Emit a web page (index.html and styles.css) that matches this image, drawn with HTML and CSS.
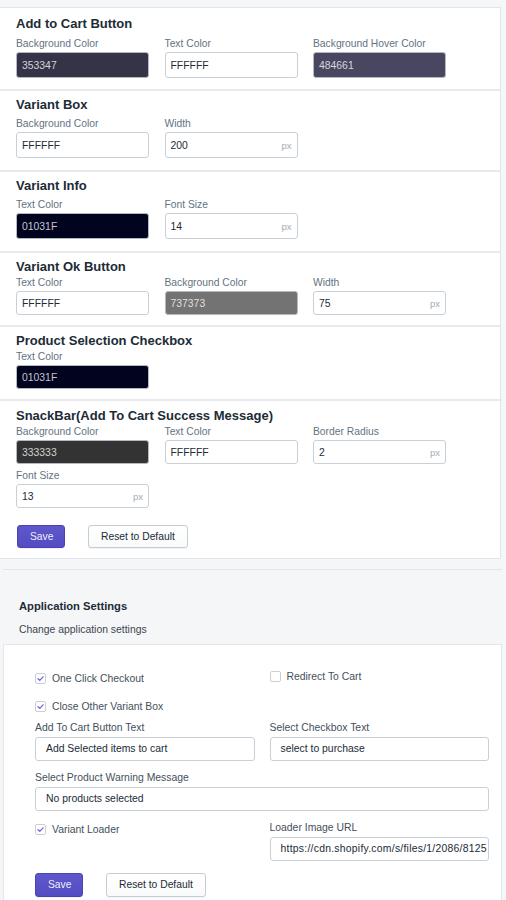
FILE: index.html
```html
<!DOCTYPE html>
<html lang="en">
<head>
<meta charset="utf-8">
<title>Settings</title>
<link rel="stylesheet" href="styles.css">
</head>
<body>
<div class="page">
  <div class="settings">
    <section class="group first">
      <h2 class="group-title">Add to Cart Button</h2>
      <div class="fields">
        <div class="field"><span class="field-label">Background Color</span><div class="input dark" style="background:#353347">353347</div></div>
        <div class="field"><span class="field-label">Text Color</span><div class="input">FFFFFF</div></div>
        <div class="field"><span class="field-label">Background Hover Color</span><div class="input dark" style="background:#484661">484661</div></div>
      </div>
    </section>
    <section class="group">
      <h2 class="group-title">Variant Box</h2>
      <div class="fields">
        <div class="field"><span class="field-label">Background Color</span><div class="input">FFFFFF</div></div>
        <div class="field"><span class="field-label">Width</span><div class="input"><span>200</span><span class="suffix">px</span></div></div>
      </div>
    </section>
    <section class="group">
      <h2 class="group-title">Variant Info</h2>
      <div class="fields">
        <div class="field"><span class="field-label">Text Color</span><div class="input dark" style="background:#01031F">01031F</div></div>
        <div class="field"><span class="field-label">Font Size</span><div class="input"><span>14</span><span class="suffix">px</span></div></div>
      </div>
    </section>
    <section class="group compact">
      <h2 class="group-title">Variant Ok Button</h2>
      <div class="fields">
        <div class="field"><span class="field-label">Text Color</span><div class="input">FFFFFF</div></div>
        <div class="field"><span class="field-label">Background Color</span><div class="input dark" style="background:#737373">737373</div></div>
        <div class="field"><span class="field-label">Width</span><div class="input"><span>75</span><span class="suffix">px</span></div></div>
      </div>
    </section>
    <section class="group compact">
      <h2 class="group-title">Product Selection Checkbox</h2>
      <div class="fields">
        <div class="field"><span class="field-label">Text Color</span><div class="input dark" style="background:#01031F">01031F</div></div>
      </div>
    </section>
    <section class="group compact last">
      <h2 class="group-title">SnackBar(Add To Cart Success Message)</h2>
      <div class="fields">
        <div class="field"><span class="field-label">Background Color</span><div class="input dark" style="background:#333333">333333</div></div>
        <div class="field"><span class="field-label">Text Color</span><div class="input">FFFFFF</div></div>
        <div class="field"><span class="field-label">Border Radius</span><div class="input"><span>2</span><span class="suffix">px</span></div></div>
        <div class="field"><span class="field-label">Font Size</span><div class="input"><span>13</span><span class="suffix">px</span></div></div>
      </div>
      <div class="actions top-actions">
        <button class="btn primary">Save</button>
        <button class="btn">Reset to Default</button>
      </div>
    </section>
  </div>

  <div class="app">
    <div class="app-head">
      <h2 class="app-title">Application Settings</h2>
      <p class="app-sub">Change application settings</p>
    </div>
    <div class="app-card">
      <div class="two">
        <label class="check"><span class="box"><svg viewBox="0 0 11 11" width="11" height="11"><path d="M3 5.7 L4.8 7.3 L8.1 3.8" fill="none" stroke="#6a5fd4" stroke-width="1.2" stroke-linecap="round" stroke-linejoin="round"/></svg></span>One Click Checkout</label>
        <label class="check redirect"><span class="box"></span>Redirect To Cart</label>
      </div>
      <label class="check row-close"><span class="box"><svg viewBox="0 0 11 11" width="11" height="11"><path d="M3 5.7 L4.8 7.3 L8.1 3.8" fill="none" stroke="#6a5fd4" stroke-width="1.2" stroke-linecap="round" stroke-linejoin="round"/></svg></span>Close Other Variant Box</label>
      <div class="two row-texts">
        <div><span class="app-label">Add To Cart Button Text</span><div class="tinput">Add Selected items to cart</div></div>
        <div><span class="app-label">Select Checkbox Text</span><div class="tinput">select to purchase</div></div>
      </div>
      <div class="row-gap"><span class="app-label">Select Product Warning Message</span><div class="tinput">No products selected</div></div>
      <div class="two row-gap">
        <label class="check loader"><span class="box"><svg viewBox="0 0 11 11" width="11" height="11"><path d="M3 5.7 L4.8 7.3 L8.1 3.8" fill="none" stroke="#6a5fd4" stroke-width="1.2" stroke-linecap="round" stroke-linejoin="round"/></svg></span>Variant Loader</label>
        <div><span class="app-label">Loader Image URL</span><div class="tinput url">https://cdn.shopify.com/s/files/1/2086/8125</div></div>
      </div>
      <div class="actions app-actions">
        <button class="btn primary big">Save</button>
        <button class="btn big">Reset to Default</button>
      </div>
    </div>
  </div>
</div>
</body>
</html>
```
FILE: styles.css
```css
* { box-sizing: border-box; }

body {
  margin: 0;
  background: #f5f6f8;
  font-family: "Liberation Sans", Arial, sans-serif;
  color: #212b36;
}

.page {
  padding-top: 7px;
  height: 900px;
  overflow: hidden;
}

.settings {
  width: 501px;
  border-top: 1px solid #e1e4e8;
  border-right: 1px solid #e1e4e8;
}

.group {
  background: #fff;
  padding: 6px 16px 12px;
  border-bottom: 2px solid #e7e9ec;
}

.group.first { padding-top: 8px; padding-bottom: 11px; }
.group.first .group-title { margin-bottom: 5px; }

.group-title {
  margin: 0 0 4px;
  font-size: 13px;
  line-height: 16px;
  font-weight: 700;
  color: #212b36;
}

.fields {
  display: grid;
  grid-template-columns: repeat(3, 133px);
  column-gap: 15.5px;
  row-gap: 5px;
}

.field-label {
  display: block;
  font-size: 10.3px;
  line-height: 13px;
  color: #637381;
  margin-bottom: 2px;
  white-space: nowrap;
}

.input {
  height: 26px;
  border: 1px solid #c9cfd6;
  border-radius: 3px;
  background: #fff;
  display: flex;
  align-items: center;
  justify-content: space-between;
  padding: 0 5px;
  font-size: 10.4px;
  color: #212b36;
}

.input.dark {
  color: rgba(255, 255, 255, 0.78);
  border-color: #b4b8bf;
}

.suffix {
  color: #a3acb6;
  font-size: 9.5px;
}

.group.compact { padding-bottom: 10px; }
.group.compact .group-title { margin-bottom: 1px; }
.group.compact .input { height: 24px; }

.group.last {
  border-bottom: 1px solid #e1e4e8;
  padding-top: 7px;
  padding-bottom: 10px;
}

.actions {
  display: flex;
  align-items: center;
}

.top-actions {
  margin-top: 17px;
  gap: 23px;
  padding-left: 1px;
}

.btn {
  font-family: "Liberation Sans", Arial, sans-serif;
  font-size: 10.3px;
  height: 23px;
  padding: 0 12px;
  border: 1px solid #c4cdd5;
  border-radius: 3px;
  background: linear-gradient(#ffffff, #f9fafb);
  color: #212b36;
  box-shadow: 0 1px 0 rgba(22, 29, 37, 0.05);
}

.btn.primary {
  background: linear-gradient(#5f58cc, #534cc2);
  border-color: #4942b2;
  color: rgba(255, 255, 255, 0.92);
  width: 48px;
}

.btn.big { height: 24px; }

.app {
  margin-top: 10px;
  margin-left: 3px;
  width: 499px;
  border-top: 1px solid #e3e5e8;
}

.app-head {
  padding: 29px 16px 8px;
}

.app-title {
  margin: 0;
  font-size: 11.2px;
  line-height: 14px;
  font-weight: 700;
  color: #212b36;
}

.app-sub {
  margin: 10px 0 0;
  font-size: 10.4px;
  line-height: 13px;
  color: #3d4550;
}

.app-card {
  background: #fff;
  border: 1px solid #e3e5e8;
  padding: 27px 12px 20px 31px;
}

.two {
  display: grid;
  grid-template-columns: minmax(0, 1fr) minmax(0, 1fr);
  column-gap: 15px;
  align-items: start;
}

.check {
  display: flex;
  align-items: center;
  gap: 6px;
  font-size: 10.4px;
  line-height: 13px;
  color: #454f5b;
}

.redirect { margin-top: -2px; }

.box {
  width: 11px;
  height: 11px;
  border: 1px solid #c9cfd6;
  border-radius: 2px;
  background: #fff;
  display: flex;
  align-items: center;
  justify-content: center;
  flex: none;
}

.box svg { display: block; margin: -1px; }

.row-close { margin-top: 14.5px; }
.row-texts { margin-top: 8px; }
.row-gap { margin-top: 10px; }
.loader { margin-top: 2px; }

.app-label {
  display: block;
  font-size: 10.4px;
  line-height: 13px;
  color: #454f5b;
  margin-bottom: 3px;
}

.tinput {
  height: 24px;
  border: 1px solid #c9cfd6;
  border-radius: 3px;
  background: #fff;
  display: flex;
  align-items: center;
  padding: 0 3px 0 10px;
  font-size: 10.4px;
  color: #212b36;
  white-space: nowrap;
  overflow: hidden;
}

.tinput.url {
  letter-spacing: 0.25px;
}

.app-actions {
  margin-top: 12px;
  gap: 23px;
}
```
